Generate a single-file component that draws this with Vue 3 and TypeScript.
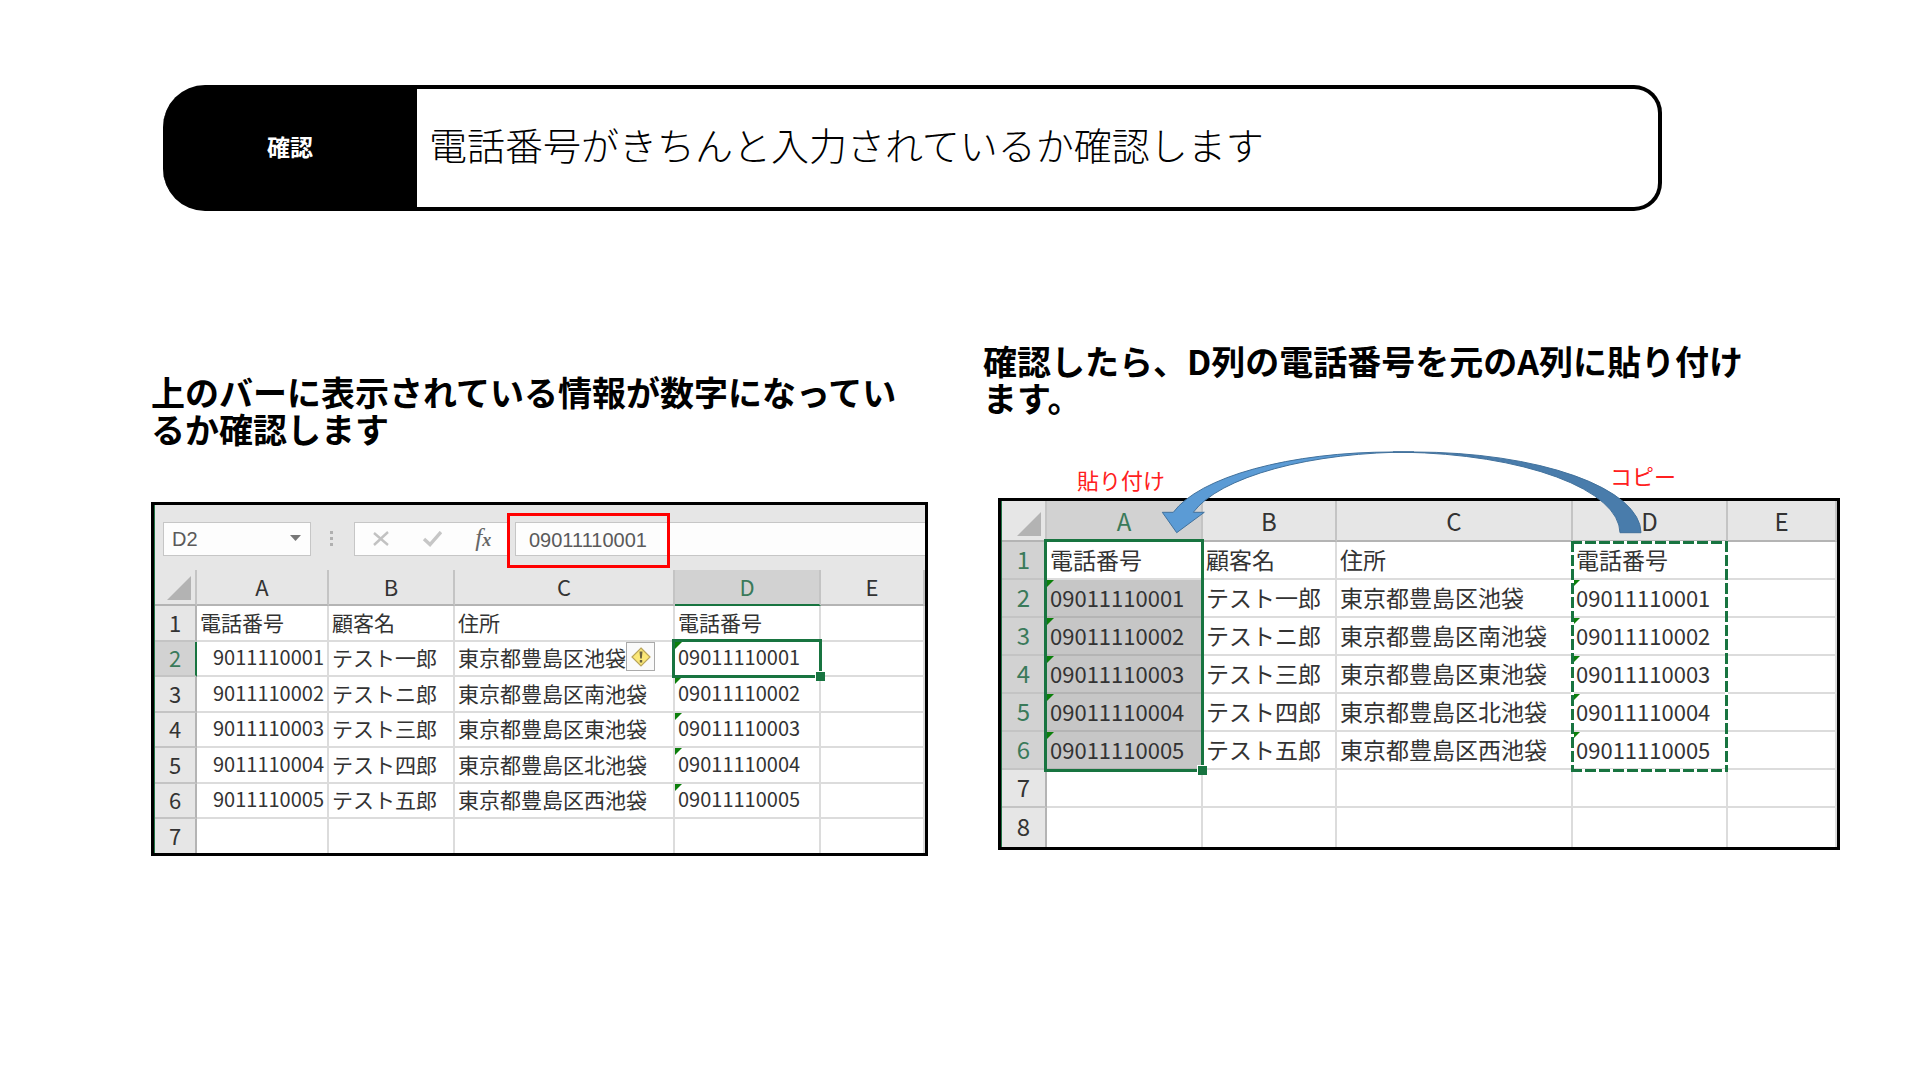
<script setup lang="ts">
interface Cell {
  text: string
  flag?: boolean
  right?: boolean
}

const names: string[] = ['テスト一郎', 'テストニ郎', 'テスト三郎', 'テスト四郎', 'テスト五郎']
const areas: string[] = ['池袋', '南池袋', '東池袋', '北池袋', '西池袋']
const columns: string[] = ['A', 'B', 'C', 'D', 'E']

function buildRows(converted: boolean, total: number): Cell[][] {
  const rows: Cell[][] = [
    [{ text: '電話番号' }, { text: '顧客名' }, { text: '住所' }, { text: '電話番号' }, { text: '' }],
  ]
  names.forEach((name, i) => {
    const phone = `901111000${i + 1}`
    rows.push([
      converted ? { text: `0${phone}`, flag: true } : { text: phone, right: true },
      { text: name },
      { text: `東京都豊島区${areas[i]}` },
      { text: `0${phone}`, flag: true },
      { text: '' },
    ])
  })
  while (rows.length < total) {
    rows.push(columns.map(() => ({ text: '' })))
  }
  return rows
}

const checkRows = buildRows(false, 7)
const pasteRows = buildRows(true, 8)

const isNumber = (text: string): boolean => /^\d+$/.test(text)
</script>

<template>
  <div class="slide">
    <header class="banner">
      <div class="banner-tag">確認</div>
      <h1 class="banner-title">電話番号がきちんと入力されているか確認します</h1>
    </header>

    <main class="steps">
      <section class="step step-check">
        <h2 class="step-title">上のバーに表示されている情報が数字になっているか確認します</h2>
        <div class="sheet sheet-check">
          <div class="formula-bar">
            <div class="name-box">
              <input class="name-input" type="text" value="D2" aria-label="名前ボックス" />
              <button class="name-arrow" type="button" aria-label="一覧">
                <svg width="11" height="6" viewBox="0 0 11 6"><path d="M0 0H11L5.500 6Z" fill="#777" /></svg>
              </button>
            </div>
            <svg class="grip" width="4" height="16" viewBox="0 0 4 16">
              <path d="M0 0h3v3h-3zM0 6h3v3h-3zM0 12h3v3h-3z" fill="#b0b0b0" />
            </svg>
            <div class="tools">
              <button type="button" aria-label="キャンセル">
                <svg width="18" height="16" viewBox="0 0 18 16">
                  <path d="M2 2L16 14M16 1L2 14" fill="none" stroke="#c2c2c2" stroke-width="2.4" />
                </svg>
              </button>
              <button type="button" aria-label="入力">
                <svg width="20" height="16" viewBox="0 0 20 16">
                  <path d="M2 8L8 13.500L19 1" fill="none" stroke="#c6c6c6" stroke-width="3.4" />
                </svg>
              </button>
              <button class="fx" type="button" aria-label="関数の挿入">f<small>x</small></button>
            </div>
            <div class="formula">
              <input class="formula-input" type="text" value="09011110001" aria-label="数式バー" />
              <div class="red-frame"></div>
            </div>
          </div>
          <table>
            <colgroup>
              <col class="w-head" /><col class="w-a" /><col class="w-b" /><col class="w-c" /><col class="w-d" /><col />
            </colgroup>
            <thead>
              <tr>
                <th class="corner"><svg viewBox="0 0 24 24"><path d="M24 0V24H0Z" fill="#b3b3b3" /></svg></th>
                <th v-for="c in columns" :key="c" scope="col" :class="{ on: c === 'D' }">{{ c }}</th>
              </tr>
            </thead>
            <tbody>
              <tr v-for="(row, r) in checkRows" :key="r">
                <th scope="row" :class="{ on: r === 1 }">{{ r + 1 }}</th>
                <td
                  v-for="(cell, c) in row"
                  :key="c"
                  :class="{ flag: cell.flag, right: cell.right, num: isNumber(cell.text) }"
                >
                  {{ cell.text }}
                  <span v-if="r === 1 && c === 3" class="selection one-cell"></span>
                  <span v-if="r === 1 && c === 2" class="warning">
                    <svg width="20" height="20" viewBox="0 0 20 20">
                      <path d="M10 1L19 10L10 19L1 10Z" fill="#fbe878" stroke="#b9a45a" stroke-width="1.2" />
                      <path d="M8.500 4.500h3l-.7 7h-1.600zM8.800 13h2.400v2.400h-2.400z" fill="#6b6340" />
                    </svg>
                  </span>
                </td>
              </tr>
            </tbody>
          </table>
        </div>
      </section>

      <section class="step step-paste">
        <h2 class="step-title">確認したら、D列の電話番号を元のA列に貼り付けます。</h2>
        <div class="notes">
          <span class="note-paste">貼り付け</span>
          <span class="note-copy">コピー</span>
        </div>
        <div class="sheet sheet-paste">
          <table>
            <colgroup>
              <col class="w-head" /><col class="w-a" /><col class="w-b" /><col class="w-c" /><col class="w-d" /><col />
            </colgroup>
            <thead>
              <tr>
                <th class="corner"><svg viewBox="0 0 24 24"><path d="M24 0V24H0Z" fill="#b3b3b3" /></svg></th>
                <th v-for="c in columns" :key="c" scope="col" :class="{ on: c === 'A' }">{{ c }}</th>
              </tr>
            </thead>
            <tbody>
              <tr v-for="(row, r) in pasteRows" :key="r">
                <th scope="row" :class="{ on: r < 6 }">{{ r + 1 }}</th>
                <td
                  v-for="(cell, c) in row"
                  :key="c"
                  :class="{ flag: cell.flag, num: isNumber(cell.text), picked: c === 0 && r > 0 && r < 6 }"
                >
                  {{ cell.text }}
                  <span v-if="r === 0 && c === 0" class="selection six-cells"></span>
                  <span v-if="r === 0 && c === 3" class="marching"></span>
                </td>
              </tr>
            </tbody>
          </table>
          <svg class="arrow" width="484" height="86" viewBox="1160 450 484 86">
            <path
              d="M1176.700 532.700L1162.300 512.300H1173.300A227 81 0 0 1 1393 452H1414A227 81 0 0 0 1193.300 512.300H1204.300Z"
              fill="#5b9bd5"
              stroke="#41719c"
            />
            <path
              d="M1393 452H1414A227 81 0 0 1 1641 532.700H1620A227 81 0 0 0 1403 452.200Z"
              fill="#497cab"
              stroke="#41719c"
            />
          </svg>
        </div>
      </section>
    </main>
  </div>
</template>

<style>
body {
  margin: 0;
  background: #fff;
}
</style>

<style scoped>
* {
  box-sizing: border-box;
}

.slide {
  padding-top: 85px;
  font-family: "Noto Sans CJK JP", sans-serif;
  color: #000;
}

.banner {
  display: flex;
  height: 126px;
  margin: 0 258px 0 163px;
  border: solid #000;
  border-width: 4px 4px 4px 0;
  border-radius: 42px 28px 28px 42px;
  background: #000;
}

.banner-tag {
  display: flex;
  flex: none;
  align-items: center;
  justify-content: center;
  width: 254px;
  padding-bottom: 4px;
  color: #fff;
  font-size: 23px;
  font-weight: 700;
}

.banner-title {
  flex: 1;
  margin: 0;
  padding-left: 12px;
  border-radius: 0 24px 24px 0;
  background: #fff;
  font-size: 38px;
  font-weight: 300;
  line-height: 110px;
}

.steps {
  display: grid;
  grid-template-columns: 777fr 857fr;
  gap: 55px;
  align-items: start;
  padding: 131px 80px 0 151px;
}

.step-check {
  padding-top: 31px;
}

.step-title {
  max-width: 777px;
  margin: 0;
  font-size: 34px;
  font-weight: 700;
  line-height: 37px;
}

.step-check .sheet {
  margin-top: 55px;
}

.notes {
  display: flex;
  align-items: flex-end;
  height: 82px;
  padding: 0 0 7px 94px;
  color: #ff2020;
  font-size: 22px;
  line-height: 24px;
}

.note-copy {
  margin: 0 0 4px 445px;
}

.sheet {
  position: relative;
  border: 3px solid #000;
  background: #e6e6e6;
}

.sheet-paste {
  margin-left: 15px;
}

.formula-bar {
  display: flex;
  height: 65px;
  padding: 17px 0 14px 8px;
  border-left: 1px solid #217346;
}

.name-box {
  display: flex;
  width: 148px;
  border: 1px solid #c6c6c6;
  background: #fdfdfd;
}

.name-input,
.formula-input {
  min-width: 0;
  padding: 0;
  border: 0;
  background: none;
  color: #5a5a5a;
  font: 20px "Liberation Sans", sans-serif;
}

.name-input {
  flex: 1;
  padding-left: 8px;
}

.formula-input {
  flex: 1;
  padding: 2px 0 0 13px;
}

button {
  display: flex;
  align-items: center;
  justify-content: center;
  padding: 0;
  border: 0;
  background: none;
}

.name-arrow {
  width: 30px;
  padding-bottom: 3px;
}

.grip {
  flex: none;
  margin: 9px 20px 0 19px;
}

.tools {
  display: flex;
  width: 156px;
  border: 1px solid #c6c6c6;
  background: #fdfdfd;
}

.tools button {
  flex: 1;
}

.tools .fx {
  padding-bottom: 2px;
  color: #666;
  font: italic 400 25px/30px "Liberation Serif", serif;
}

.fx small {
  padding-top: 4px;
  font-size: 18px;
  font-weight: 700;
}

.formula {
  position: relative;
  display: flex;
  flex: 1;
  margin-left: 5px;
  border: 1px solid #c6c6c6;
  border-right: 0;
  background: #fdfdfd;
}

.red-frame {
  position: absolute;
  top: -10px;
  left: -9px;
  width: 163px;
  height: 55px;
  border: 3px solid #f00;
}

table {
  width: 100%;
  border-left: 1px solid #217346;
  border-spacing: 0;
  table-layout: fixed;
  color: #333;
  font-size: 21px;
  line-height: 30px;
}

th,
td {
  position: relative;
  height: 36px;
  padding: 0 3px 3px;
  border: solid #dcdcdc;
  border-width: 0 2px 2px 0;
  background: #fff;
  font-weight: 400;
  text-align: left;
  white-space: nowrap;
}

th {
  padding: 0 0 3px;
  border-color: #b4b4b4;
  background: #e6e6e6;
  font-size: 22px;
  text-align: center;
}

tbody th {
  border-bottom-color: #c4c4c4;
}

th.on {
  background: #d2d2d2;
  color: #3a7a5a;
}

thead th {
  border-right-color: #c4c4c4;
}

.sheet-check .num {
  font-size: 20px;
}

.right {
  text-align: right;
}

.corner svg {
  position: absolute;
  right: 4px;
  bottom: 4px;
  width: 24px;
  height: 24px;
}

.flag::before {
  position: absolute;
  top: 0;
  left: 0;
  border-bottom: 7px solid transparent;
  border-left: 7px solid #0b7f0b;
  content: "";
}

.sheet-check .w-head { width: 42px; }
.sheet-check .w-a { width: 132px; }
.sheet-check .w-b { width: 126px; }
.sheet-check .w-c { width: 220px; }
.sheet-check .w-d { width: 146px; }

.sheet-check tbody tr:nth-child(even) > * {
  height: 35px;
}

.sheet-check tbody tr:last-child > * {
  height: 34px;
  border-bottom: 0;
}

.sheet-check thead th.on {
  border-bottom-color: #187440;
}

.sheet-check tbody th.on {
  border-right-color: #187440;
}

.selection {
  position: absolute;
  z-index: 1;
  border: 3px solid #187440;
}

.selection::after {
  position: absolute;
  right: -6px;
  bottom: -6px;
  width: 9px;
  height: 9px;
  border: solid #fff;
  border-width: 1px 0 0 1px;
  background: #187440;
  content: "";
}

.one-cell {
  top: -3px;
  right: -3px;
  bottom: -3px;
  left: -3px;
}

.warning {
  position: absolute;
  top: 0;
  right: 18px;
  display: flex;
  align-items: center;
  justify-content: center;
  width: 29px;
  height: 29px;
  border: 1px solid #aaa;
  background: #fafafa;
}

.sheet-paste .w-head { width: 45px; }
.sheet-paste .w-a { width: 156px; }
.sheet-paste .w-b { width: 134px; }
.sheet-paste .w-c { width: 236px; }
.sheet-paste .w-d { width: 155px; }

.sheet-paste table {
  font-size: 23px;
}

.sheet-paste th,
.sheet-paste td {
  height: 38px;
}

.sheet-paste thead th {
  height: 41px;
  padding-bottom: 0;
  font-size: 24px;
}

.sheet-paste tbody th {
  font-size: 24px;
}

.sheet-paste .num {
  font-size: 22px;
}

.sheet-paste tbody tr:last-child > * {
  height: 39px;
  border-bottom: 0;
}

.sheet-paste .picked {
  border-bottom-color: #b4b4b4;
  background: #c6c6c6;
}

.six-cells {
  top: -3px;
  right: -3px;
  left: -3px;
  height: 233px;
}

.marching {
  position: absolute;
  z-index: 1;
  top: -1px;
  right: -2px;
  left: -2px;
  height: 231px;
  background:
    repeating-linear-gradient(90deg, #187440 0 11px, #fff 11px 14px) 0 0 / 100% 3px no-repeat,
    repeating-linear-gradient(90deg, #187440 0 11px, #fff 11px 14px) 0 100% / 100% 3px no-repeat,
    repeating-linear-gradient(#187440 0 11px, #fff 11px 14px) 0 0 / 3px 100% no-repeat,
    repeating-linear-gradient(#187440 0 11px, #fff 11px 14px) 100% 0 / 3px 100% no-repeat;
}

.arrow {
  position: absolute;
  z-index: 2;
  top: -51px;
  left: 159px;
}
</style>
